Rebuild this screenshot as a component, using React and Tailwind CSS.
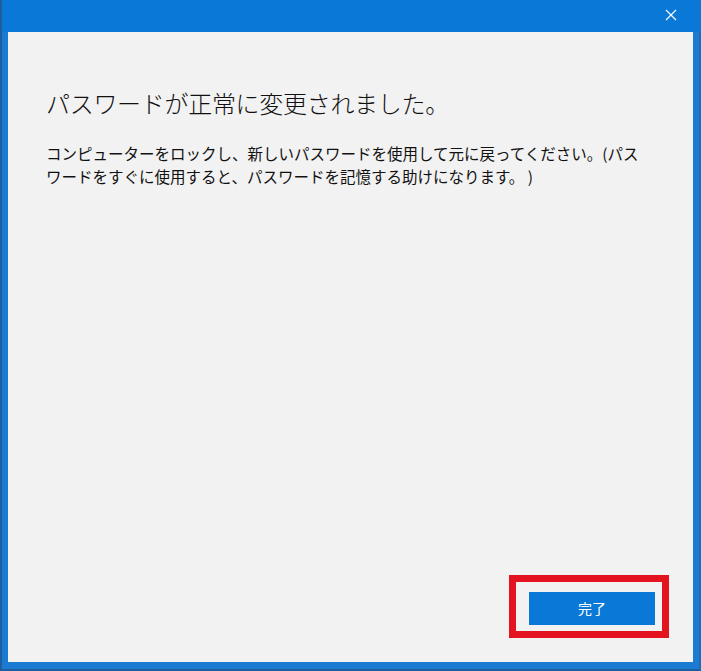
import React from "react";

export default function App() {
  const font = { fontFamily: '"Noto Sans CJK JP", "Noto Sans", sans-serif' };
  return (
    <div
      className="w-[701px] h-[671px] bg-[#1b7bd3] border-l-2 border-l-[#1d5e9e] border-b-2 border-b-[#1d5e9e] border-r-2 border-r-[#1a6dbb] flex flex-col"
      style={font}
    >
      <div className="h-8 bg-[#0a78d6] flex justify-end items-center shrink-0 -mr-[2px] pr-[24px]">
        <svg width="12" height="12" viewBox="0 0 12 12" className="mb-[2px]">
          <path d="M1 1 L11 11 M11 1 L1 11" stroke="#ffffff" strokeWidth="1.2" />
        </svg>
      </div>
      <div className="flex-1 flex ml-[6px] mr-[6px] mb-[7px]">
        <div className="flex-1 bg-[#f2f2f2] flex flex-col pl-[38px] pr-6 pb-6">
          <h1 className="mt-[54px] text-[24px] leading-[34px] font-light text-[#111] tracking-[-0.3px]">
            パスワードが正常に変更されました。
          </h1>
          <p className="mt-[22px] text-[15.5px] leading-[23px] text-[#111] whitespace-pre">
            {"コンピューターをロックし、新しいパスワードを使用して元に戻ってください。(パス"}
            <br />
            {"ワードをすぐに使用すると、パスワードを記憶する助けになります。 )"}
          </p>
          <div className="flex-1" />
          <div className="flex justify-end">
            <div className="border-[7px] border-[#e3141f] pl-[13px] pt-[10px] pr-[7px] pb-[6px]">
              <button className="w-[126px] h-[33px] bg-[#0a78d6] text-white text-[14px] flex items-center justify-center">
                完了
              </button>
            </div>
          </div>
        </div>
      </div>
    </div>
  );
}
